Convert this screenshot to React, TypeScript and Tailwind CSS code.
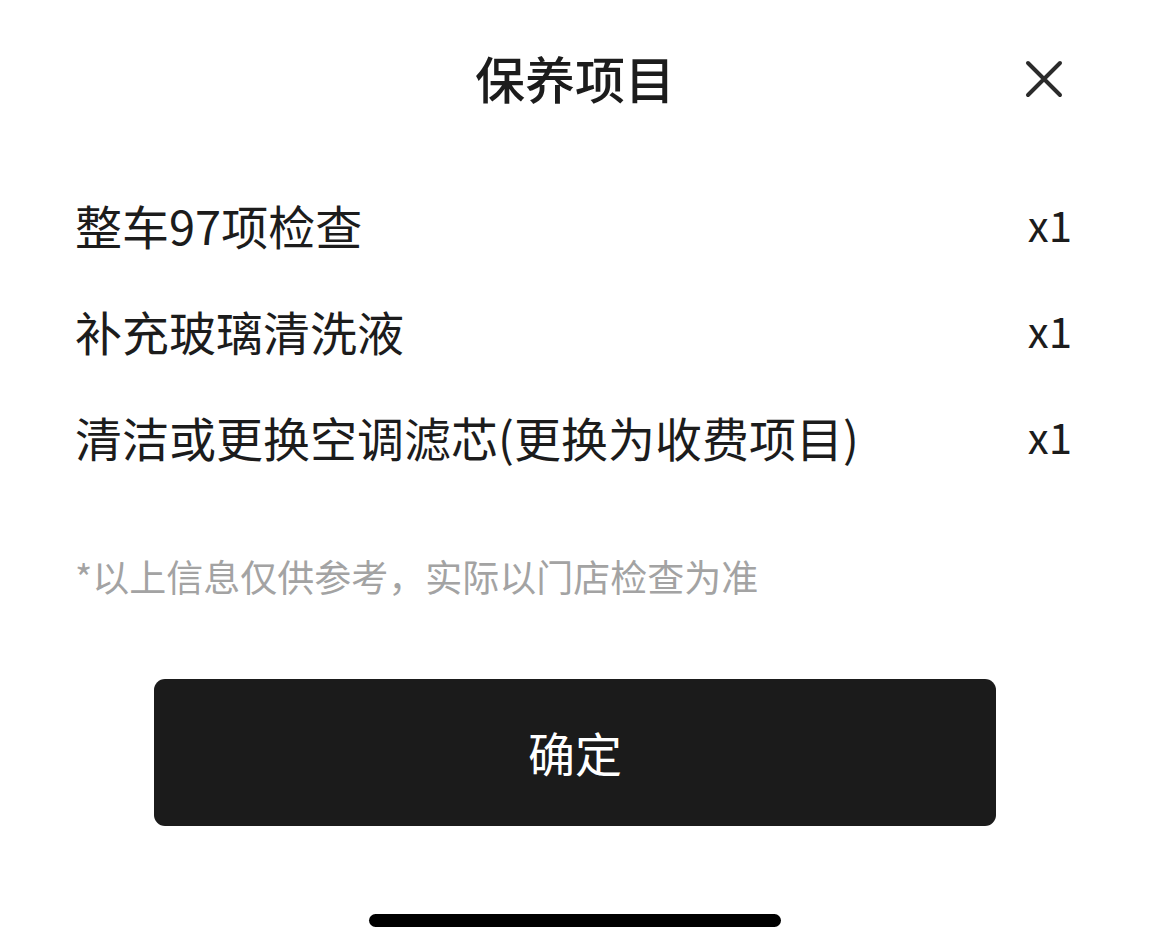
import React from 'react'

const items = [
  { name: '整车97项检查', count: 'x1' },
  { name: '补充玻璃清洗液', count: 'x1' },
  { name: '清洁或更换空调滤芯(更换为收费项目)', count: 'x1' },
]

function CloseIcon() {
  return (
    <svg width="40" height="40" viewBox="0 0 40 40" fill="none">
      <path d="M4 4L36 36M36 4L4 36" stroke="#2b2b2b" strokeWidth="4" strokeLinecap="round" />
    </svg>
  )
}

export default function App() {
  return (
    <div
      className="relative flex h-[948px] w-[1150px] flex-col bg-white text-[#1c1c1c]"
      style={{ fontFamily: '"Noto Sans CJK SC", "Noto Sans", sans-serif' }}
    >
      {/* Header */}
      <div className="relative flex h-[160px] items-center justify-center pb-[6px]">
        <h1 className="text-[50px] font-medium leading-none">保养项目</h1>
        <button className="absolute right-[86px] top-[59px] flex h-[40px] w-[40px] items-center justify-center">
          <CloseIcon />
        </button>
      </div>

      {/* Items */}
      <ul className="flex flex-col px-[75px] pt-[11px]">
        {items.map((item) => (
          <li key={item.name} className="flex h-[106px] items-center justify-between text-[47px] leading-none">
            <span>{item.name}</span>
            <span className="pr-[3px] text-[42px]">{item.count}</span>
          </li>
        ))}
      </ul>

      {/* Note */}
      <p className="mt-[61px] px-[75px] text-[37px] leading-[52px] text-[#a3a3a3]">
        *以上信息仅供参考，实际以门店检查为准
      </p>

      {/* Confirm */}
      <div className="mt-[77px] flex justify-center">
        <button className="flex h-[147px] w-[842px] items-center justify-center rounded-[11px] bg-[#1b1b1b] text-[47px] text-white">
          确定
        </button>
      </div>

      {/* Home indicator */}
      <div className="mt-[88px] flex justify-center">
        <div className="h-[13px] w-[412px] rounded-full bg-black" />
      </div>
    </div>
  )
}
